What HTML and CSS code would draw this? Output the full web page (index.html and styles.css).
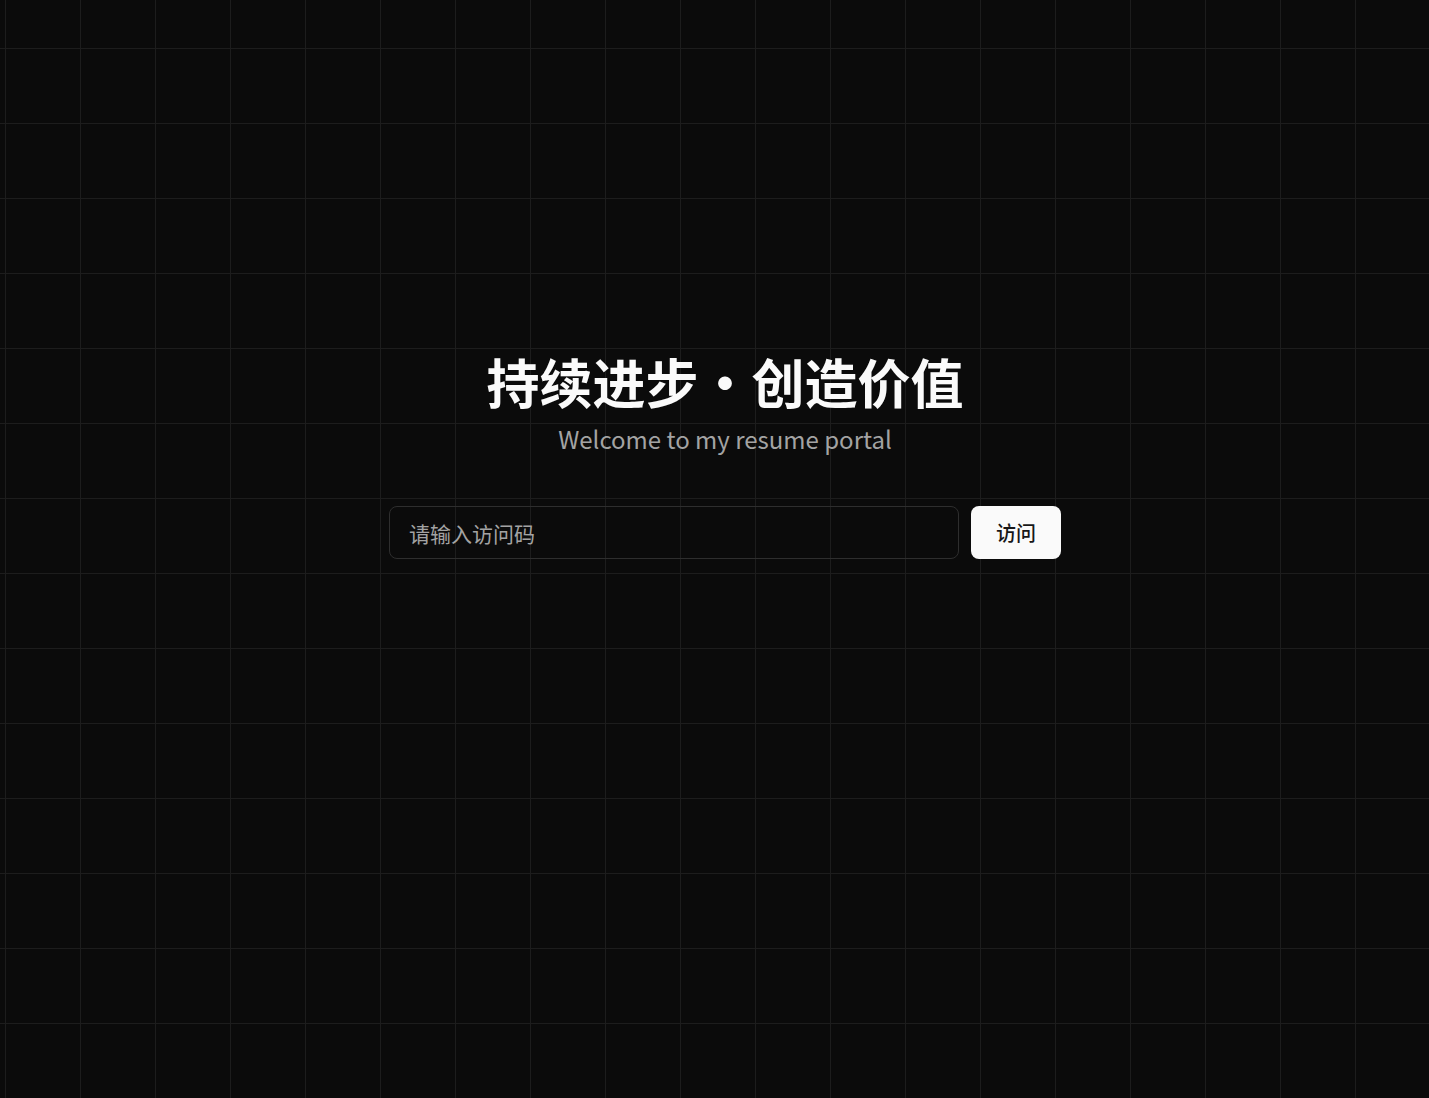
FILE: index.html
```html
<!DOCTYPE html>
<html lang="zh-CN">
<head>
<meta charset="utf-8">
<title>Resume Portal</title>
<link rel="stylesheet" href="styles.css">
</head>
<body>
<main class="page">
  <section class="hero">
    <h1 class="title">持续进步・创造价值</h1>
    <p class="subtitle">Welcome to my resume portal</p>
    <form class="access">
      <input class="code-input" type="text" placeholder="请输入访问码">
      <button class="visit-btn" type="button">访问</button>
    </form>
  </section>
</main>
</body>
</html>
```
FILE: styles.css
```css
html, body {
  margin: 0;
  padding: 0;
  height: 100%;
}
body {
  background-color: #0b0b0b;
  background-image:
    linear-gradient(to right, #1d1d1d 1px, transparent 1px),
    linear-gradient(to bottom, #1d1d1d 1px, transparent 1px);
  background-size: 75px 75px;
  background-position: 5px 48px;
  font-family: "Noto Sans CJK SC", "Noto Sans", sans-serif;
  color: #fafafa;
}
.page {
  min-height: 100%;
  display: flex;
  justify-content: center;
  padding-left: 21px;
  box-sizing: border-box;
}
.hero {
  padding-top: 350px;
  display: flex;
  flex-direction: column;
  align-items: center;
}
.title {
  margin: 0;
  font-size: 53px;
  line-height: 62px;
  font-weight: 700;
  color: #fafafa;
}
.subtitle {
  margin: 11px 0 0;
  font-size: 24px;
  line-height: 32px;
  color: #a3a3a3;
}
.access {
  margin-top: 51px;
  display: flex;
  gap: 12px;
}
.code-input {
  width: 570px;
  height: 53px;
  box-sizing: border-box;
  background: transparent;
  border: 1px solid #2e2e2e;
  border-radius: 8px;
  padding: 0 19px;
  font-family: inherit;
  font-size: 21px;
  color: #fafafa;
  outline: none;
}
.code-input::placeholder {
  color: #a3a3a3;
}
.visit-btn {
  width: 90px;
  height: 53px;
  border: none;
  border-radius: 8px;
  background: #fafafa;
  color: #171717;
  font-family: inherit;
  font-size: 20px;
  font-weight: 500;
  cursor: pointer;
}
```
